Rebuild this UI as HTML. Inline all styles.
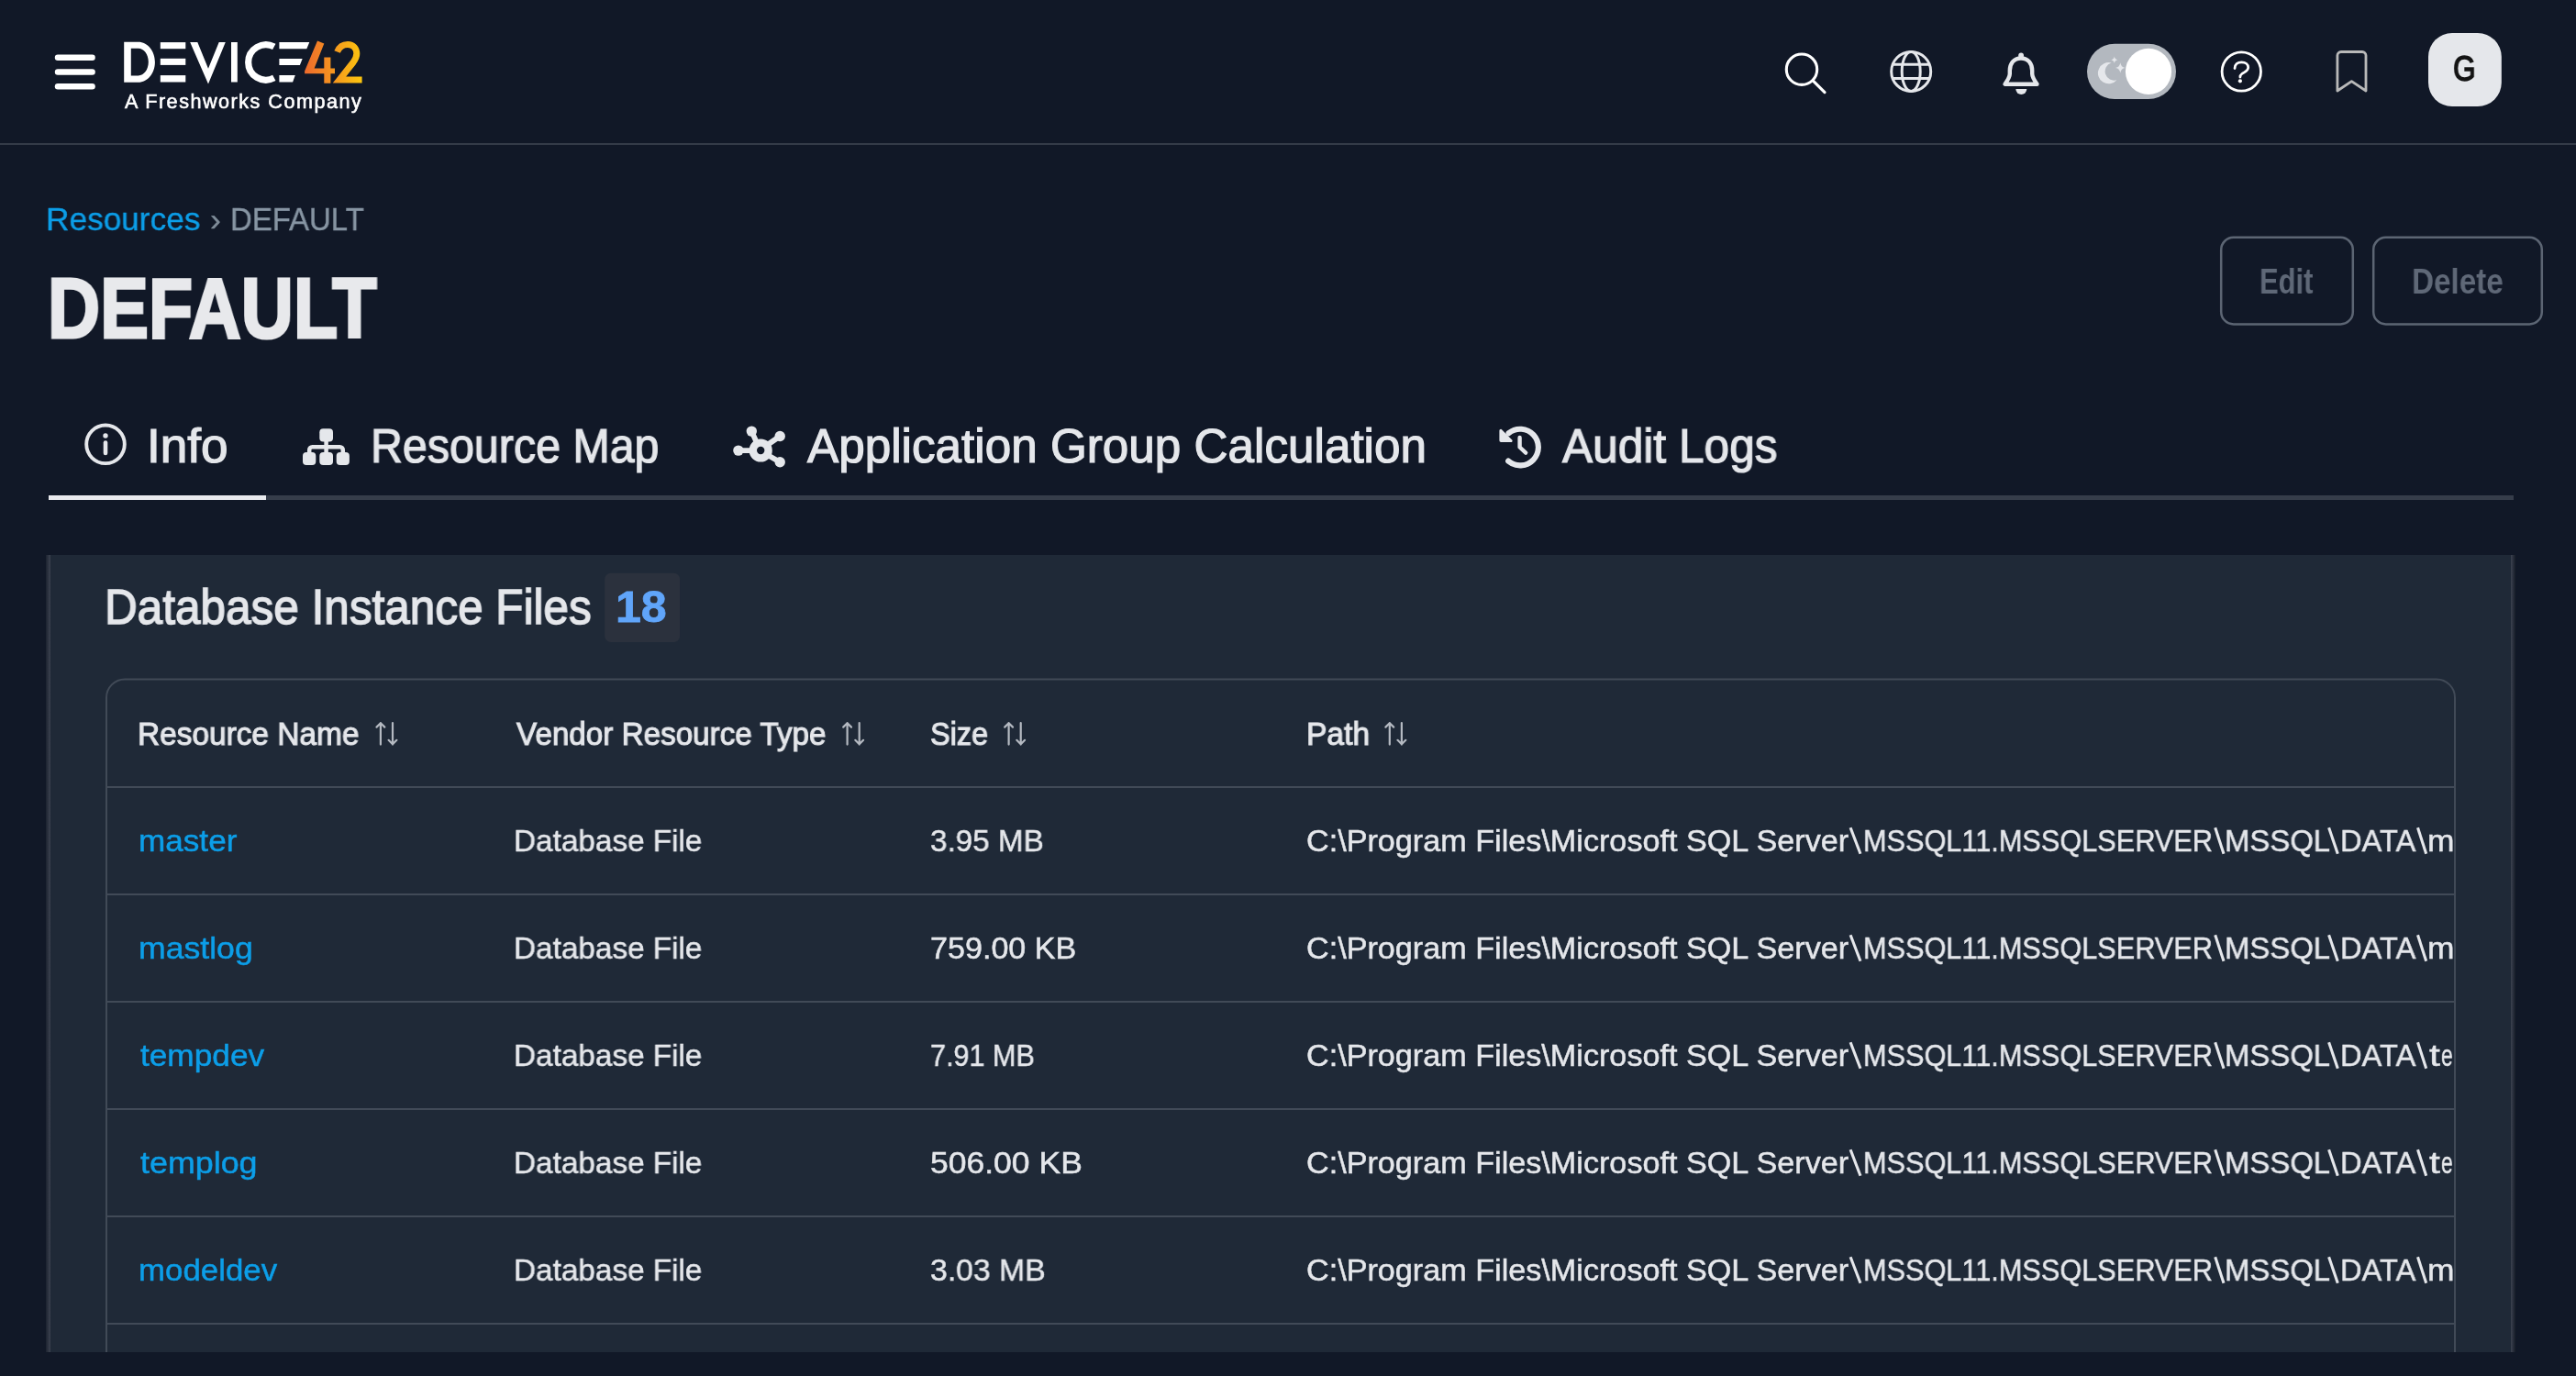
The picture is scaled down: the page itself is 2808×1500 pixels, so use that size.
<!DOCTYPE html>
<html><head><meta charset="utf-8">
<style>
*{margin:0;padding:0;box-sizing:border-box}
html,body{width:2808px;height:1500px;overflow:hidden;background:#111827;font-family:"Liberation Sans",sans-serif}
.t{position:absolute;white-space:nowrap;line-height:normal;will-change:transform}
svg{position:absolute;left:0;top:0}
#clip{position:absolute;left:1313px;top:740px;width:1362px;height:734px;overflow:hidden}
#cardclip{position:absolute;left:0;top:0;width:2808px;height:1474px;overflow:hidden}
</style></head>
<body>
<svg width="2808" height="1500" viewBox="0 0 2808 1500">
<rect x="0" y="156" width="2808" height="2" fill="#343b48"/>
<rect x="59.8" y="59.5" width="44" height="6.4" rx="3.2" fill="#ffffff"/>
<rect x="59.8" y="75.3" width="44" height="6.4" rx="3.2" fill="#ffffff"/>
<rect x="59.8" y="91.0" width="44" height="6.4" rx="3.2" fill="#ffffff"/>
<path fill="#ffffff" fill-rule="evenodd" d="M135.2 45.7H150.7C161 45.7 168.9 55.5 168.9 67.7C168.9 79.9 161 89.7 150.7 89.7H135.2Z M142.8 52.8V82.4H150.7C157 82.4 161.8 76 161.8 67.6C161.8 59.2 157 52.8 150.7 52.8Z"/>
<rect x="174.8" y="46.1" width="27.5" height="7.1" fill="#ffffff"/><rect x="174.8" y="63.8" width="27.5" height="7.1" fill="#ffffff"/><rect x="174.8" y="82.1" width="27.5" height="7.4" fill="#ffffff"/>
<path fill="#ffffff" d="M207.2 46H215.3L227 74.8L238.7 46H245.8L227 91.6Z"/>
<rect x="252" y="46" width="6.8" height="43.5" fill="#ffffff"/>
<path fill="none" stroke="#ffffff" stroke-width="7.2" d="M298.8 50.9A19.2 19.2 0 1 0 298.8 84.9"/>
<path fill="#ffffff" d="M304.4 46.1H337.3L334.3 53.2H304.4Z M304.4 63.9H329.7L326.9 71H304.4Z M304.4 82.1H321.8L319.1 89.5H304.4Z"/>
<defs><linearGradient id="lg42" gradientUnits="userSpaceOnUse" x1="332" y1="0" x2="395" y2="0"><stop offset="0" stop-color="#ee6a2c"/><stop offset="0.5" stop-color="#f5961f"/><stop offset="1" stop-color="#fdc70e"/></linearGradient></defs>
<path fill="url(#lg42)" d="M346 44.6L353.3 47.6L342.6 74.5H353.3V62.6H360.4V74.5H365V80.2H360.4V90.8H353.3V80.2H332.1V77.5Z"/>
<path fill="none" stroke="url(#lg42)" stroke-width="7" d="M367.6 56.5C369.8 51 374 48.4 379 48.4C385 48.4 388.8 53 388.8 58.6C388.8 62 387.4 64.8 385 68L370 86.9H394.6"/>
<circle cx="1964" cy="75.7" r="16.7" fill="none" stroke="#ffffff" stroke-width="3.1"/>
<path d="M1976.4 88.2L1989 100.6" stroke="#ffffff" stroke-width="3.2" stroke-linecap="round"/>
<g fill="none" stroke="#e5e7eb" stroke-width="3"><circle cx="2083.2" cy="77.9" r="21.5"/><ellipse cx="2083.2" cy="77.9" rx="10" ry="21.5"/><path d="M2063 70.2H2103.4M2063 85.6H2103.4"/></g>
<path fill="none" stroke="#e5e7eb" stroke-width="4.4" stroke-linejoin="round" d="M2203 63.5C2195 63.5 2190.8 69.5 2190.8 77V80.5C2190.8 84 2188.5 87.5 2185.5 91.8H2220.5C2217.5 87.5 2215.2 84 2215.2 80.5V77C2215.2 69.5 2211 63.5 2203 63.5Z"/>
<circle cx="2203.1" cy="60.5" r="2.9" fill="#e5e7eb"/>
<path fill="#e5e7eb" d="M2197.3 96.9H2209.3A6 6 0 0 1 2197.3 96.9Z"/>
<rect x="2275" y="47.8" width="97" height="60.2" rx="30.1" fill="#b3b8bf"/>
<circle cx="2342" cy="77.9" r="25.1" fill="#ffffff"/>
<path fill="#e5e7eb" d="M2301.5 68.5A11.6 11.6 0 1 0 2307.4 87.2A9.5 9.5 0 1 1 2301.5 68.5Z"/>
<path fill="#e5e7eb" d="M2304.8 61.5Q2305.3 64.8 2308.3 65.3Q2305.3 65.8 2304.8 69Q2304.3 65.8 2301.3 65.3Q2304.3 64.8 2304.8 61.5Z"/>
<path fill="#e5e7eb" d="M2311.3 68.2Q2311.9 73.2 2316.6 73.9Q2311.9 74.6 2311.3 79.5Q2310.7 74.6 2306 73.9Q2310.7 73.2 2311.3 68.2Z"/>
<circle cx="2443.3" cy="78" r="21.2" fill="none" stroke="#ffffff" stroke-width="2.8"/>
<path fill="none" stroke="#ffffff" stroke-width="2.8" stroke-linecap="round" d="M2436 74.5C2436 70.2 2439 67.8 2443.5 67.8C2448 67.8 2450.7 70.5 2450.7 73.5C2450.7 77.5 2446.5 78.5 2443.8 80.5C2442.3 81.6 2441.9 82.6 2441.9 84"/>
<circle cx="2441.9" cy="88.3" r="2.1" fill="#ffffff"/>
<path fill="none" stroke="#b9b9b9" stroke-width="2.8" stroke-linejoin="round" d="M2547.9 99V60.5A4 4 0 0 1 2551.9 56.5H2575A4 4 0 0 1 2579 60.5V99L2563.4 88.6Z"/>
<rect x="2647" y="35.9" width="79.8" height="80.1" rx="26" fill="#e5e7eb"/>
<rect x="2421.2" y="258.8" width="143.6" height="94.6" rx="13.5" fill="none" stroke="#5c6573" stroke-width="2.5"/>
<rect x="2587.2" y="258.8" width="183.6" height="94.6" rx="13.5" fill="none" stroke="#5c6573" stroke-width="2.5"/>
<rect x="53" y="540" width="2687" height="5" fill="#363d4a"/>
<rect x="53" y="540" width="237" height="5" fill="#e9eaee"/>
<circle cx="115" cy="484.3" r="20.8" fill="none" stroke="#e5e7eb" stroke-width="3.9"/>
<circle cx="115" cy="475" r="2.7" fill="#e5e7eb"/><rect x="112.7" y="480.3" width="4.6" height="16" rx="2.3" fill="#e5e7eb"/>
<g fill="#e5e7eb"><rect x="348.3" y="467.2" width="14.7" height="14.2" rx="4"/><rect x="330" y="492.9" width="14.3" height="14" rx="4"/><rect x="348.3" y="492.9" width="14.7" height="14" rx="4"/><rect x="366.7" y="492.9" width="14.2" height="14" rx="4"/></g>
<path fill="none" stroke="#e5e7eb" stroke-width="4.5" d="M355.6 481V493M337.2 494V490.5A3.3 3.3 0 0 1 340.5 487.2H370.5A3.3 3.3 0 0 1 373.8 490.5V494"/>
<g fill="#e5e7eb"><circle cx="804.9" cy="491.1" r="5.7"/><circle cx="819.3" cy="470.1" r="5.7"/><circle cx="850.2" cy="475.5" r="5.7"/><circle cx="850.2" cy="503.8" r="5.7"/></g>
<g stroke="#e5e7eb" stroke-width="5.8"><path d="M805 491.1H822M819.3 470.1L826 485M850.2 475.5L835 486M850.2 503.8L835 495"/></g>
<circle cx="829.2" cy="491" r="8.4" fill="none" stroke="#e5e7eb" stroke-width="8.4"/>
<path fill="none" stroke="#e5e7eb" stroke-width="6.1" stroke-linecap="round" d="M1644.6 472.2A19.8 19.8 0 1 1 1644.2 502.6"/>
<path fill="#e5e7eb" d="M1634.4 469.5A1.6 1.6 0 0 1 1637.2 468.4L1648.2 479.4A1.6 1.6 0 0 1 1647 482.1H1636.2A1.8 1.8 0 0 1 1634.4 480.3Z"/>
<path fill="none" stroke="#e5e7eb" stroke-width="4.4" stroke-linecap="round" stroke-linejoin="round" d="M1656.6 477V487.5L1663.2 493.6"/>
<rect x="50" y="605" width="2692" height="869" fill="#1f2937"/>
<defs><linearGradient id="lgl" x1="0" x2="1" y1="0" y2="0"><stop offset="0" stop-color="#1c2330"/><stop offset="1" stop-color="#3c4250"/></linearGradient><linearGradient id="lgr" x1="0" x2="1" y1="0" y2="0"><stop offset="0" stop-color="#3c4250"/><stop offset="1" stop-color="#161c28"/></linearGradient></defs>
<rect x="50" y="605" width="5" height="869" fill="url(#lgl)"/>
<rect x="2737" y="605" width="5" height="869" fill="url(#lgr)"/>
<rect x="659.2" y="624.8" width="81.9" height="75.1" rx="6.5" fill="#2b313d"/>
</svg>
<div id="cardclip">
<svg width="2808" height="1500" viewBox="0 0 2808 1500">
<path fill="none" stroke="#414a57" stroke-width="2" d="M116 1500V760.5A20 20 0 0 1 136 740.5H2656A20 20 0 0 1 2676 760.5V1500"/>
<rect x="117" y="857.0" width="2558" height="2" fill="#414a57"/>
<rect x="117" y="974.0" width="2558" height="2" fill="#414a57"/>
<rect x="117" y="1091.0" width="2558" height="2" fill="#414a57"/>
<rect x="117" y="1208.0" width="2558" height="2" fill="#414a57"/>
<rect x="117" y="1325.0" width="2558" height="2" fill="#414a57"/>
<rect x="117" y="1442.0" width="2558" height="2" fill="#414a57"/>
<g fill="none" stroke="#b4b9c1" stroke-width="2.2" stroke-linecap="round" stroke-linejoin="round"><path d="M414.9 788V811.6M410.5 792.6L414.9 788.2L419.29999999999995 792.6"/><path d="M428.0 788V811.6M423.59999999999997 806.8L428.0 811.2L432.4 806.8"/></g>
<g fill="none" stroke="#b4b9c1" stroke-width="2.2" stroke-linecap="round" stroke-linejoin="round"><path d="M923.6 788V811.6M919.2 792.6L923.6 788.2L928.0 792.6"/><path d="M936.7 788V811.6M932.3000000000001 806.8L936.7 811.2L941.1 806.8"/></g>
<g fill="none" stroke="#b4b9c1" stroke-width="2.2" stroke-linecap="round" stroke-linejoin="round"><path d="M1099.6 788V811.6M1095.1999999999998 792.6L1099.6 788.2L1104.0 792.6"/><path d="M1112.6999999999998 788V811.6M1108.3 806.8L1112.6999999999998 811.2L1117.1 806.8"/></g>
<g fill="none" stroke="#b4b9c1" stroke-width="2.2" stroke-linecap="round" stroke-linejoin="round"><path d="M1514.8 788V811.6M1510.3999999999999 792.6L1514.8 788.2L1519.2 792.6"/><path d="M1527.8999999999999 788V811.6M1523.5 806.8L1527.8999999999999 811.2L1532.3 806.8"/></g>
<path d="M2017.1 902.3L2028.0 930.8" stroke="#e5e7eb" stroke-width="3.1"/>
<path d="M2414.7 902.3L2424.0 930.8" stroke="#e5e7eb" stroke-width="3.1"/>
<path d="M2538.6 902.3L2548.3 930.8" stroke="#e5e7eb" stroke-width="3.1"/>
<path d="M2635.5 902.3L2644.7 930.8" stroke="#e5e7eb" stroke-width="3.1"/>
<path d="M2017.1 1019.3L2028.0 1047.8" stroke="#e5e7eb" stroke-width="3.1"/>
<path d="M2414.7 1019.3L2424.0 1047.8" stroke="#e5e7eb" stroke-width="3.1"/>
<path d="M2538.6 1019.3L2548.3 1047.8" stroke="#e5e7eb" stroke-width="3.1"/>
<path d="M2635.5 1019.3L2644.7 1047.8" stroke="#e5e7eb" stroke-width="3.1"/>
<path d="M2017.1 1136.3L2028.0 1164.8" stroke="#e5e7eb" stroke-width="3.1"/>
<path d="M2414.7 1136.3L2424.0 1164.8" stroke="#e5e7eb" stroke-width="3.1"/>
<path d="M2538.6 1136.3L2548.3 1164.8" stroke="#e5e7eb" stroke-width="3.1"/>
<path d="M2635.5 1136.3L2644.7 1164.8" stroke="#e5e7eb" stroke-width="3.1"/>
<path d="M2017.1 1253.3L2028.0 1281.8" stroke="#e5e7eb" stroke-width="3.1"/>
<path d="M2414.7 1253.3L2424.0 1281.8" stroke="#e5e7eb" stroke-width="3.1"/>
<path d="M2538.6 1253.3L2548.3 1281.8" stroke="#e5e7eb" stroke-width="3.1"/>
<path d="M2635.5 1253.3L2644.7 1281.8" stroke="#e5e7eb" stroke-width="3.1"/>
<path d="M2017.1 1370.3L2028.0 1398.8" stroke="#e5e7eb" stroke-width="3.1"/>
<path d="M2414.7 1370.3L2424.0 1398.8" stroke="#e5e7eb" stroke-width="3.1"/>
<path d="M2538.6 1370.3L2548.3 1398.8" stroke="#e5e7eb" stroke-width="3.1"/>
<path d="M2635.5 1370.3L2644.7 1398.8" stroke="#e5e7eb" stroke-width="3.1"/>
</svg>
</div>
<div class="t" style="left:135.70px;top:99.20px;font-size:21.5px;color:#ffffff;font-weight:normal;transform:scaleX(1.0043);transform-origin:0 0;letter-spacing:1.5px;-webkit-text-stroke:0.6px #ffffff;">A Freshworks Company</div>
<div class="t" style="left:49.82px;top:219.00px;font-size:35.5px;color:#0c9ee8;font-weight:normal;transform:scaleX(0.9922);transform-origin:0 0;-webkit-text-stroke:0.4px currentColor;">Resources</div>
<div class="t" style="left:228.50px;top:219.00px;font-size:35.5px;color:#7f8c99;font-weight:normal;transform:scaleX(1.0000);transform-origin:0 0;-webkit-text-stroke:0.4px currentColor;">›</div>
<div class="t" style="left:250.54px;top:219.00px;font-size:35.5px;color:#8795a3;font-weight:normal;transform:scaleX(0.9277);transform-origin:0 0;-webkit-text-stroke:0.4px currentColor;">DEFAULT</div>
<div class="t" style="left:52.20px;top:283.20px;font-size:93px;color:#e8e9ec;font-weight:bold;transform:scaleX(0.8499);transform-origin:0 0;-webkit-text-stroke:3px #e8e9ec;">DEFAULT</div>
<div class="t" style="left:2463.37px;top:286.00px;font-size:38px;color:#5f6877;font-weight:bold;transform:scaleX(0.8143);transform-origin:0 0;">Edit</div>
<div class="t" style="left:2629.25px;top:286.00px;font-size:38px;color:#5f6877;font-weight:bold;transform:scaleX(0.8739);transform-origin:0 0;">Delete</div>
<div class="t" style="left:160.43px;top:457.10px;font-size:51px;color:#e5e7eb;font-weight:normal;transform:scaleX(1.0425);transform-origin:0 0;-webkit-text-stroke:1.2px #e5e7eb;">Info</div>
<div class="t" style="left:404.16px;top:457.10px;font-size:51px;color:#e5e7eb;font-weight:normal;transform:scaleX(0.9480);transform-origin:0 0;-webkit-text-stroke:1.2px #e5e7eb;">Resource Map</div>
<div class="t" style="left:879.70px;top:457.10px;font-size:51px;color:#e5e7eb;font-weight:normal;transform:scaleX(1.0046);transform-origin:0 0;-webkit-text-stroke:1.2px #e5e7eb;">Application Group Calculation</div>
<div class="t" style="left:1702.97px;top:457.10px;font-size:51px;color:#e5e7eb;font-weight:normal;transform:scaleX(0.9730);transform-origin:0 0;-webkit-text-stroke:1.2px #e5e7eb;">Audit Logs</div>
<div class="t" style="left:114.28px;top:630.00px;font-size:54.5px;color:#e5e7eb;font-weight:normal;transform:scaleX(0.9077);transform-origin:0 0;-webkit-text-stroke:1.5px #e5e7eb;">Database Instance Files</div>
<div class="t" style="left:670.93px;top:633.10px;font-size:49px;color:#60a5fa;font-weight:bold;transform:scaleX(1.0220);transform-origin:0 0;-webkit-text-stroke:0.8px #60a5fa;">18</div>
<div class="t" style="left:2674.38px;top:53.20px;font-size:39px;color:#141414;font-weight:normal;transform:scaleX(0.8080);transform-origin:0 0;-webkit-text-stroke:1.6px #141414;">G</div>
<div class="t" style="left:150.09px;top:779.60px;font-size:35px;color:#e5e7eb;font-weight:normal;transform:scaleX(0.9548);transform-origin:0 0;-webkit-text-stroke:1.1px #e5e7eb;">Resource Name</div>
<div class="t" style="left:562.95px;top:779.60px;font-size:35px;color:#e5e7eb;font-weight:normal;transform:scaleX(0.9494);transform-origin:0 0;-webkit-text-stroke:1.1px #e5e7eb;">Vendor Resource Type</div>
<div class="t" style="left:1013.87px;top:779.60px;font-size:35px;color:#e5e7eb;font-weight:normal;transform:scaleX(0.9288);transform-origin:0 0;-webkit-text-stroke:1.1px #e5e7eb;">Size</div>
<div class="t" style="left:1423.78px;top:779.60px;font-size:35px;color:#e5e7eb;font-weight:normal;transform:scaleX(0.9609);transform-origin:0 0;-webkit-text-stroke:1.1px #e5e7eb;">Path</div>
<div class="t" style="left:150.73px;top:897.30px;font-size:34px;color:#0c9ee8;font-weight:normal;transform:scaleX(1.0333);transform-origin:0 0;-webkit-text-stroke:0.5px currentColor;">master</div>
<div class="t" style="left:560.04px;top:897.30px;font-size:34px;color:#e5e7eb;font-weight:normal;transform:scaleX(0.9792);transform-origin:0 0;-webkit-text-stroke:0.5px currentColor;">Database File</div>
<div class="t" style="left:1014.02px;top:897.30px;font-size:34px;color:#e5e7eb;font-weight:normal;transform:scaleX(0.9774);transform-origin:0 0;-webkit-text-stroke:0.5px currentColor;">3.95 MB</div>
<div class="t" style="left:150.70px;top:1014.30px;font-size:34px;color:#0c9ee8;font-weight:normal;transform:scaleX(1.0478);transform-origin:0 0;-webkit-text-stroke:0.5px currentColor;">mastlog</div>
<div class="t" style="left:560.04px;top:1014.30px;font-size:34px;color:#e5e7eb;font-weight:normal;transform:scaleX(0.9792);transform-origin:0 0;-webkit-text-stroke:0.5px currentColor;">Database File</div>
<div class="t" style="left:1014.00px;top:1014.30px;font-size:34px;color:#e5e7eb;font-weight:normal;transform:scaleX(1.0032);transform-origin:0 0;-webkit-text-stroke:0.5px currentColor;">759.00 KB</div>
<div class="t" style="left:152.80px;top:1131.30px;font-size:34px;color:#0c9ee8;font-weight:normal;transform:scaleX(1.0359);transform-origin:0 0;-webkit-text-stroke:0.5px currentColor;">tempdev</div>
<div class="t" style="left:560.04px;top:1131.30px;font-size:34px;color:#e5e7eb;font-weight:normal;transform:scaleX(0.9792);transform-origin:0 0;-webkit-text-stroke:0.5px currentColor;">Database File</div>
<div class="t" style="left:1014.10px;top:1131.30px;font-size:34px;color:#e5e7eb;font-weight:normal;transform:scaleX(0.8992);transform-origin:0 0;-webkit-text-stroke:0.5px currentColor;">7.91 MB</div>
<div class="t" style="left:152.80px;top:1248.30px;font-size:34px;color:#0c9ee8;font-weight:normal;transform:scaleX(1.0546);transform-origin:0 0;-webkit-text-stroke:0.5px currentColor;">templog</div>
<div class="t" style="left:560.04px;top:1248.30px;font-size:34px;color:#e5e7eb;font-weight:normal;transform:scaleX(0.9792);transform-origin:0 0;-webkit-text-stroke:0.5px currentColor;">Database File</div>
<div class="t" style="left:1013.96px;top:1248.30px;font-size:34px;color:#e5e7eb;font-weight:normal;transform:scaleX(1.0442);transform-origin:0 0;-webkit-text-stroke:0.5px currentColor;">506.00 KB</div>
<div class="t" style="left:150.75px;top:1365.30px;font-size:34px;color:#0c9ee8;font-weight:normal;transform:scaleX(1.0247);transform-origin:0 0;-webkit-text-stroke:0.5px currentColor;">modeldev</div>
<div class="t" style="left:560.04px;top:1365.30px;font-size:34px;color:#e5e7eb;font-weight:normal;transform:scaleX(0.9792);transform-origin:0 0;-webkit-text-stroke:0.5px currentColor;">Database File</div>
<div class="t" style="left:1014.01px;top:1365.30px;font-size:34px;color:#e5e7eb;font-weight:normal;transform:scaleX(0.9927);transform-origin:0 0;-webkit-text-stroke:0.5px currentColor;">3.03 MB</div>

<div id="clip">
<div class="t" style="left:111.09px;top:157.30px;font-size:34px;color:#e5e7eb;font-weight:normal;transform:scaleX(1.0051);transform-origin:0 0;-webkit-text-stroke:0.5px currentColor;">C:\Program Files\Microsoft SQL Server</div>
<div class="t" style="left:717.69px;top:157.30px;font-size:34px;color:#e5e7eb;font-weight:normal;transform:scaleX(0.9026);transform-origin:0 0;-webkit-text-stroke:0.5px currentColor;">MSSQL11.MSSQLSERVER</div>
<div class="t" style="left:1111.87px;top:157.30px;font-size:34px;color:#e5e7eb;font-weight:normal;transform:scaleX(0.9672);transform-origin:0 0;-webkit-text-stroke:0.5px currentColor;">MSSQL</div>
<div class="t" style="left:1238.18px;top:157.30px;font-size:34px;color:#e5e7eb;font-weight:normal;transform:scaleX(0.9607);transform-origin:0 0;-webkit-text-stroke:0.5px currentColor;">DATA</div>
<div class="t" style="left:1332.92px;top:157.30px;font-size:34px;color:#e5e7eb;font-weight:normal;transform:scaleX(1.0400);transform-origin:0 0;-webkit-text-stroke:0.5px currentColor;">m</div>
<div class="t" style="left:1362.29px;top:157.30px;font-size:34px;color:#e5e7eb;font-weight:normal;transform:scaleX(0.7143);transform-origin:0 0;-webkit-text-stroke:0.5px currentColor;">aster.mdf</div>
<div class="t" style="left:111.09px;top:274.30px;font-size:34px;color:#e5e7eb;font-weight:normal;transform:scaleX(1.0051);transform-origin:0 0;-webkit-text-stroke:0.5px currentColor;">C:\Program Files\Microsoft SQL Server</div>
<div class="t" style="left:717.69px;top:274.30px;font-size:34px;color:#e5e7eb;font-weight:normal;transform:scaleX(0.9026);transform-origin:0 0;-webkit-text-stroke:0.5px currentColor;">MSSQL11.MSSQLSERVER</div>
<div class="t" style="left:1111.87px;top:274.30px;font-size:34px;color:#e5e7eb;font-weight:normal;transform:scaleX(0.9672);transform-origin:0 0;-webkit-text-stroke:0.5px currentColor;">MSSQL</div>
<div class="t" style="left:1238.18px;top:274.30px;font-size:34px;color:#e5e7eb;font-weight:normal;transform:scaleX(0.9607);transform-origin:0 0;-webkit-text-stroke:0.5px currentColor;">DATA</div>
<div class="t" style="left:1332.92px;top:274.30px;font-size:34px;color:#e5e7eb;font-weight:normal;transform:scaleX(1.0400);transform-origin:0 0;-webkit-text-stroke:0.5px currentColor;">m</div>
<div class="t" style="left:1362.29px;top:274.30px;font-size:34px;color:#e5e7eb;font-weight:normal;transform:scaleX(0.7143);transform-origin:0 0;-webkit-text-stroke:0.5px currentColor;">aster.mdf</div>
<div class="t" style="left:111.09px;top:391.30px;font-size:34px;color:#e5e7eb;font-weight:normal;transform:scaleX(1.0051);transform-origin:0 0;-webkit-text-stroke:0.5px currentColor;">C:\Program Files\Microsoft SQL Server</div>
<div class="t" style="left:717.69px;top:391.30px;font-size:34px;color:#e5e7eb;font-weight:normal;transform:scaleX(0.9026);transform-origin:0 0;-webkit-text-stroke:0.5px currentColor;">MSSQL11.MSSQLSERVER</div>
<div class="t" style="left:1111.87px;top:391.30px;font-size:34px;color:#e5e7eb;font-weight:normal;transform:scaleX(0.9672);transform-origin:0 0;-webkit-text-stroke:0.5px currentColor;">MSSQL</div>
<div class="t" style="left:1238.18px;top:391.30px;font-size:34px;color:#e5e7eb;font-weight:normal;transform:scaleX(0.9607);transform-origin:0 0;-webkit-text-stroke:0.5px currentColor;">DATA</div>
<div class="t" style="left:1335.00px;top:391.30px;font-size:34px;color:#e5e7eb;font-weight:normal;transform:scaleX(1.2500);transform-origin:0 0;-webkit-text-stroke:0.5px currentColor;">t</div>
<div class="t" style="left:1348.33px;top:391.30px;font-size:34px;color:#e5e7eb;font-weight:normal;transform:scaleX(0.6706);transform-origin:0 0;-webkit-text-stroke:0.5px currentColor;">empdb.mdf</div>
<div class="t" style="left:111.09px;top:508.30px;font-size:34px;color:#e5e7eb;font-weight:normal;transform:scaleX(1.0051);transform-origin:0 0;-webkit-text-stroke:0.5px currentColor;">C:\Program Files\Microsoft SQL Server</div>
<div class="t" style="left:717.69px;top:508.30px;font-size:34px;color:#e5e7eb;font-weight:normal;transform:scaleX(0.9026);transform-origin:0 0;-webkit-text-stroke:0.5px currentColor;">MSSQL11.MSSQLSERVER</div>
<div class="t" style="left:1111.87px;top:508.30px;font-size:34px;color:#e5e7eb;font-weight:normal;transform:scaleX(0.9672);transform-origin:0 0;-webkit-text-stroke:0.5px currentColor;">MSSQL</div>
<div class="t" style="left:1238.18px;top:508.30px;font-size:34px;color:#e5e7eb;font-weight:normal;transform:scaleX(0.9607);transform-origin:0 0;-webkit-text-stroke:0.5px currentColor;">DATA</div>
<div class="t" style="left:1335.00px;top:508.30px;font-size:34px;color:#e5e7eb;font-weight:normal;transform:scaleX(1.2500);transform-origin:0 0;-webkit-text-stroke:0.5px currentColor;">t</div>
<div class="t" style="left:1348.33px;top:508.30px;font-size:34px;color:#e5e7eb;font-weight:normal;transform:scaleX(0.6706);transform-origin:0 0;-webkit-text-stroke:0.5px currentColor;">empdb.mdf</div>
<div class="t" style="left:111.09px;top:625.30px;font-size:34px;color:#e5e7eb;font-weight:normal;transform:scaleX(1.0051);transform-origin:0 0;-webkit-text-stroke:0.5px currentColor;">C:\Program Files\Microsoft SQL Server</div>
<div class="t" style="left:717.69px;top:625.30px;font-size:34px;color:#e5e7eb;font-weight:normal;transform:scaleX(0.9026);transform-origin:0 0;-webkit-text-stroke:0.5px currentColor;">MSSQL11.MSSQLSERVER</div>
<div class="t" style="left:1111.87px;top:625.30px;font-size:34px;color:#e5e7eb;font-weight:normal;transform:scaleX(0.9672);transform-origin:0 0;-webkit-text-stroke:0.5px currentColor;">MSSQL</div>
<div class="t" style="left:1238.18px;top:625.30px;font-size:34px;color:#e5e7eb;font-weight:normal;transform:scaleX(0.9607);transform-origin:0 0;-webkit-text-stroke:0.5px currentColor;">DATA</div>
<div class="t" style="left:1332.92px;top:625.30px;font-size:34px;color:#e5e7eb;font-weight:normal;transform:scaleX(1.0400);transform-origin:0 0;-webkit-text-stroke:0.5px currentColor;">m</div>
<div class="t" style="left:1362.29px;top:625.30px;font-size:34px;color:#e5e7eb;font-weight:normal;transform:scaleX(0.7143);transform-origin:0 0;-webkit-text-stroke:0.5px currentColor;">aster.mdf</div>

</div>
</body></html>
